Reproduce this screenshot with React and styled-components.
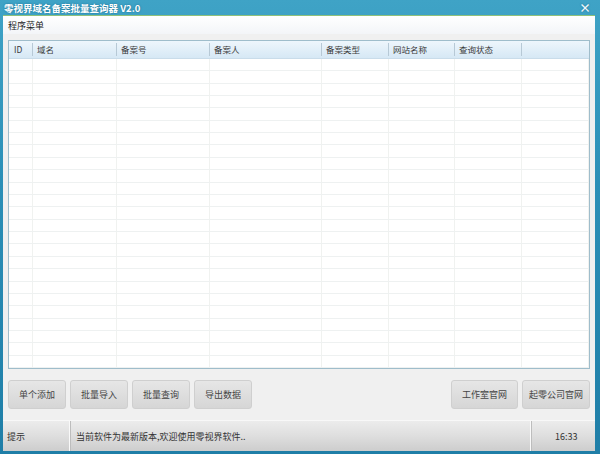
import React from "react";
import styled, { createGlobalStyle } from "styled-components";

const GlobalStyle = createGlobalStyle`
  html, body { margin: 0; padding: 0; }
  body {
    width: 600px;
    height: 454px;
    overflow: hidden;
    font-family: "Microsoft YaHei", "Noto Sans CJK SC", "Liberation Sans", sans-serif;
    font-size: 9px;
    color: #3a3a3a;
  }
`;

const Frame = styled.div`
  width: 600px;
  height: 454px;
  box-sizing: border-box;
  display: flex;
  flex-direction: column;
  background: linear-gradient(to bottom, #3fa3c6 0%, #2b8fb7 40%, #1f7ea7 100%);
  padding: 0 5px 3px 3px;
`;

const TitleBar = styled.div`
  height: 15px;
  display: flex;
  align-items: center;
  justify-content: space-between;
  color: #fff;
  font-weight: bold;
  font-size: 9.5px;
  padding-left: 1px;
  text-shadow: 0 0 2px #1a6a8c;
`;

const Close = styled.span`
  font-size: 12px;
  line-height: 12px;
  margin-right: 4px;
  color: #eaf6fb;
  font-weight: bold;
`;

const Body = styled.div`
  flex: 1;
  display: flex;
  flex-direction: column;
  background: #f0f0f0;
  border-top: 1px solid #8fc07a;
  min-height: 0;
`;

const MenuBar = styled.div`
  height: 18px;
  display: flex;
  align-items: center;
  padding-left: 5px;
  background: linear-gradient(to bottom, #ffffff, #f3f5f8);
  font-size: 9px;
  color: #222;
`;

const Content = styled.div`
  flex: 1;
  display: flex;
  flex-direction: column;
  padding: 6px 5px 0 5px;
  min-height: 0;
`;

const Table = styled.div`
  height: 331px;
  box-sizing: border-box;
  border: 1px solid #9fbdcb;
  background: #fff;
  display: flex;
  flex-direction: column;
  overflow: hidden;
`;

const cols = "24px 84px 93px 112px 67px 66px 67px 1fr";

const HeadRow = styled.div`
  display: grid;
  grid-template-columns: ${cols};
  height: 17px;
  background: linear-gradient(to bottom, #eef6fc, #d6e8f5);
  border-bottom: 1px solid #c9dcea;
`;

const HeadCell = styled.div`
  display: flex;
  align-items: center;
  padding-left: ${(p) => (p.$first ? "5px" : "4px")};
  border-right: ${(p) => (p.$last ? "none" : "1px solid #b7c9d6")};
  font-size: 8.5px;
  color: #3a3a3a;
  margin: 2px 0;
`;

const Row = styled.div`
  display: grid;
  grid-template-columns: ${cols};
  height: 12.5px;
  box-sizing: border-box;
  border-bottom: 1px solid #eef1f1;
`;

const Cell = styled.div`
  border-right: 1px solid #f0f2f0;
`;

const ButtonBar = styled.div`
  display: flex;
  justify-content: space-between;
  padding-top: 11px;
`;

const Group = styled.div`
  display: flex;
  gap: 4px;
`;

const Button = styled.button`
  width: ${(p) => p.$w || 58}px;
  height: 29px;
  border: 1px solid #cfcfcf;
  border-radius: 3px;
  background: linear-gradient(to bottom, #e6e6e6, #d6d6d6);
  font-family: inherit;
  font-size: 9px;
  color: #444;
  padding: 0;
`;

const StatusBar = styled.div`
  margin-top: 11px;
  height: 30px;
  display: flex;
  align-items: center;
  background: linear-gradient(to bottom, #ececec 0%, #dedede 50%, #cdcdcd 100%);
  border-top: 1px solid #f8f8f8;
  font-size: 9px;
  color: #333;
`;

const StatusCell = styled.div`
  height: 100%;
  display: flex;
  align-items: center;
  box-sizing: border-box;
  padding-left: ${(p) => p.$pad || 4}px;
  width: ${(p) => (p.$w ? p.$w + "px" : "auto")};
  flex: ${(p) => (p.$w ? "none" : 1)};
  border-right: ${(p) => (p.$div ? "1px solid #f9f9f9" : "none")};
  box-shadow: ${(p) => (p.$div ? "1px 0 0 #bdbdbd" : "none")};
`;

const headers = ["ID", "域名", "备案号", "备案人", "备案类型", "网站名称", "查询状态", ""];

export default function App() {
  const rows = Array.from({ length: 25 });
  return (
    <>
      <GlobalStyle />
      <Frame>
        <TitleBar>
          <span>零视界域名备案批量查询器 V2.0</span>
          <Close>×</Close>
        </TitleBar>
        <Body>
          <MenuBar>程序菜单</MenuBar>
          <Content>
            <Table>
              <HeadRow>
                {headers.map((h, i) => (
                  <HeadCell key={i} $first={i === 0} $last={i === headers.length - 1}>
                    {h}
                  </HeadCell>
                ))}
              </HeadRow>
              {rows.map((_, r) => (
                <Row key={r}>
                  {headers.map((_, i) => (
                    <Cell key={i} />
                  ))}
                </Row>
              ))}
            </Table>
            <ButtonBar>
              <Group>
                <Button>单个添加</Button>
                <Button>批量导入</Button>
                <Button>批量查询</Button>
                <Button>导出数据</Button>
              </Group>
              <Group>
                <Button $w={67}>工作室官网</Button>
                <Button $w={68}>起零公司官网</Button>
              </Group>
            </ButtonBar>
          </Content>
          <StatusBar>
            <StatusCell $w={67} $div>提示</StatusCell>
            <StatusCell $pad={6} $div>当前软件为最新版本,欢迎使用零视界软件..</StatusCell>
            <StatusCell $w={64} $pad={24}>16:33</StatusCell>
          </StatusBar>
        </Body>
      </Frame>
    </>
  );
}
